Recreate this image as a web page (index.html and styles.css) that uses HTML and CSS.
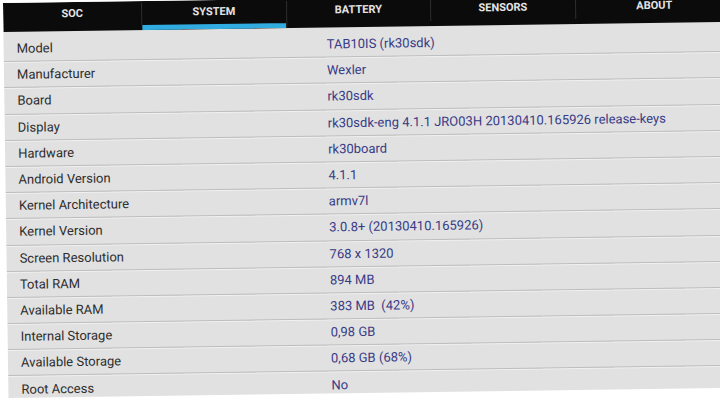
FILE: index.html
```html
<!DOCTYPE html>
<html>
<head>
<meta charset="utf-8">
<link rel="stylesheet" href="styles.css">
</head>
<body>
<div class="screen">
  <div class="tabs">
    <div class="tab first">SOC</div>
    <div class="tab active">SYSTEM</div>
    <div class="tab">BATTERY</div>
    <div class="tab">SENSORS</div>
    <div class="tab last">ABOUT</div>
  </div>
  <div class="list">
    <div class="row"><span class="label">Model</span><span class="value">TAB10IS (rk30sdk)</span></div>
    <div class="row"><span class="label">Manufacturer</span><span class="value">Wexler</span></div>
    <div class="row"><span class="label">Board</span><span class="value">rk30sdk</span></div>
    <div class="row"><span class="label">Display</span><span class="value">rk30sdk-eng 4.1.1 JRO03H 20130410.165926 release-keys</span></div>
    <div class="row"><span class="label">Hardware</span><span class="value">rk30board</span></div>
    <div class="row"><span class="label">Android Version</span><span class="value">4.1.1</span></div>
    <div class="row"><span class="label">Kernel Architecture</span><span class="value">armv7l</span></div>
    <div class="row"><span class="label">Kernel Version</span><span class="value">3.0.8+ (20130410.165926)</span></div>
    <div class="row"><span class="label">Screen Resolution</span><span class="value">768 x 1320</span></div>
    <div class="row"><span class="label">Total RAM</span><span class="value">894 MB</span></div>
    <div class="row"><span class="label">Available RAM</span><span class="value">383 MB&nbsp; (42%)</span></div>
    <div class="row"><span class="label">Internal Storage</span><span class="value">0,98 GB</span></div>
    <div class="row"><span class="label">Available Storage</span><span class="value">0,68 GB (68%)</span></div>
    <div class="row"><span class="label">Root Access</span><span class="value">No</span></div>
  </div>
</div>
</body>
</html>
```
FILE: styles.css
```css
html, body {
  margin: 0;
  padding: 0;
  background: #ffffff;
  overflow: hidden;
  width: 720px;
  height: 402px;
}
.screen {
  margin: 3px 0 0 3px;
  width: 730px;
  height: 395px;
  overflow: hidden;
  background: #e1e1e1;
  transform: rotate(-0.8deg);
  transform-origin: 0 0;
  font-family: Roboto, "Noto Sans", sans-serif;
}
.tabs {
  display: flex;
  height: 29px;
  background: #0b0b0b;
}
.tab {
  width: 144.5px;
  box-sizing: border-box;
  color: #e4e4e4;
  font-size: 11px;
  font-weight: bold;
  text-align: center;
  padding-top: 4px;
  border-right: 1px solid #2e2e2e;
  height: 22px;
  margin-top: 2px;
  line-height: 12px;
}
.tab.first {
  width: 139px;
}
.tab.active {
  height: 27px;
  box-shadow: inset 0 -5px 0 #31ace0;
}
.tab.last {
  border-right: none;
  flex: 1;
}
.list {
  padding-top: 4px;
}
.row {
  display: flex;
  align-items: center;
  height: 26.2px;
  box-sizing: border-box;
  border-bottom: 1px solid #bdbdbd;
  box-shadow: 0 1px 0 #f1f1f1;
  padding-left: 13px;
  font-size: 13px;
}
.label {
  width: 310px;
  color: #2d2d2d;
}
.value {
  color: #383b86;
}
```
